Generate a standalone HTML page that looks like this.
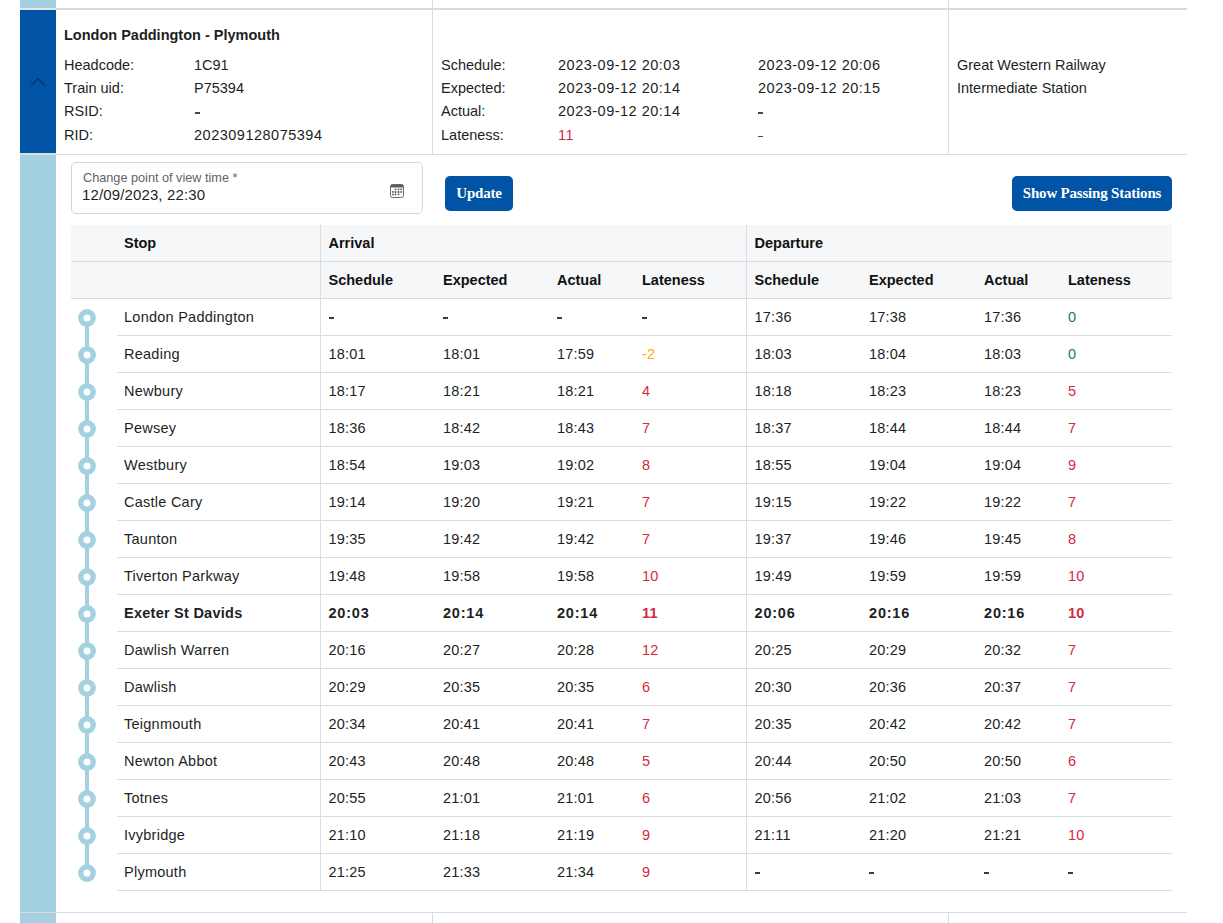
<!DOCTYPE html>
<html><head><meta charset="utf-8">
<style>
*{box-sizing:border-box;margin:0;padding:0}
html,body{width:1223px;height:923px;overflow:hidden;background:#fff}
body{font-family:"Liberation Sans",sans-serif;font-size:14px;color:#1d1f23;position:relative}
.abs{position:absolute}
.colL{position:absolute;left:20px;width:36px;background:#a4d1e1}
.vl{position:absolute;width:1px;background:#d6dbe0}
.hl{position:absolute;height:1px;background:#d6dbe0}
.info{position:absolute;line-height:23.2px;white-space:nowrap;font-size:14.5px}
.title{position:absolute;left:64px;top:25px;font-weight:bold;line-height:20px;font-size:14.5px}
.r{color:#d42a3c}.g{color:#1a7f4b}.o{color:#ffad00}
.dt{position:absolute;left:71px;top:162px;width:352px;height:52px;border:1px solid #d3d9df;border-radius:5px}
.dt .lab{position:absolute;left:11px;top:7px;font-size:12.7px;color:#5f6368;line-height:16px}
.dt .val{position:absolute;left:10px;top:23px;font-size:15px;letter-spacing:0.13px;color:#1d1f23;line-height:18px}
.btn{position:absolute;background:#0153a6;color:#fff;font-family:"Liberation Serif",serif;font-weight:bold;font-size:15px;letter-spacing:-0.2px;border-radius:5px;text-align:center;line-height:35px;height:35px;top:176px}
table{position:absolute;left:71px;top:225px;width:1101px;border-collapse:collapse;table-layout:fixed}
td,th{height:37px;padding:0 0 0 8px;text-align:left;white-space:nowrap;border-bottom:1px solid #dadee3;font-size:14.5px}
thead tr:first-child th{height:36px}
thead th{color:#111;background:#f6f7f9;font-weight:bold;border-bottom:1px solid #d9dcdf}
.bl{border-left:1px solid #dadee3}
td:nth-child(2),th:nth-child(2){padding-left:7px}
td:nth-child(2){letter-spacing:0.25px}
td.ic{border-bottom:none;position:relative;padding:0}
tr.cur td{font-weight:bold}
tr.cur td:nth-child(3),tr.cur td:nth-child(4),tr.cur td:nth-child(5),tr.cur td:nth-child(7),tr.cur td:nth-child(8),tr.cur td:nth-child(9){letter-spacing:0.8px}
td:nth-child(n+3){letter-spacing:0.2px}
.d{display:inline-block;width:5px;height:1.7px;background:#383b40;vertical-align:middle;position:relative;top:0.5px;margin-left:0}
.d2{display:inline-block;width:5px;height:1.5px;background:#45484d;vertical-align:middle;position:relative;top:0.5px}
.cr{color:#d42a3c}.cg{color:#1a7f4b}.co{color:#ffad00}
</style></head><body>
<!-- top row remnant -->
<div class="colL" style="top:0;height:8px"></div>
<div class="vl" style="left:432px;top:0;height:8px"></div>
<div class="vl" style="left:948px;top:0;height:8px"></div>
<div class="abs" style="left:56px;top:8px;width:1131px;height:2px;background:#d6dbe0"></div>
<div class="abs" style="left:20px;top:8px;width:36px;height:2px;background:#e6e6e6"></div>
<!-- info row -->
<div class="abs" style="left:20px;top:10px;width:36px;height:143px;background:#0153a6"></div>
<svg class="abs" style="left:20px;top:70px" width="36" height="24"><path d="M11.2 15.6 L18 8.7 L24.8 15.6" fill="none" stroke="#0c2c5c" stroke-width="1.2"/></svg>
<div class="vl" style="left:432px;top:10px;height:144px"></div>
<div class="vl" style="left:948px;top:10px;height:144px"></div>
<div class="hl" style="left:56px;top:154px;width:1131px"></div>
<div class="abs" style="left:20px;top:153px;width:36px;height:2px;background:#dcdcdc"></div>
<div class="title">London Paddington - Plymouth</div>
<div class="info" style="left:64px;top:54px">Headcode:<br>Train uid:<br>RSID:<br>RID:</div>
<div class="info" style="left:194px;top:54px">1C91<br>P75394<br><b class="d2" style="margin-left:1px"></b><br><span style="letter-spacing:0.5px">202309128075394</span></div>
<div class="info" style="left:441px;top:54px">Schedule:<br>Expected:<br>Actual:<br>Lateness:</div>
<div class="info" style="left:558px;top:54px;letter-spacing:0.5px">2023-09-12 20:03<br>2023-09-12 20:14<br>2023-09-12 20:14<br><span class="r">11</span></div>
<div class="info" style="left:758px;top:54px;letter-spacing:0.5px">2023-09-12 20:06<br>2023-09-12 20:15<br><b class="d2"></b><br><b class="d2"></b></div>
<div class="info" style="left:957px;top:54px">Great Western Railway<br>Intermediate Station</div>
<!-- expanded -->
<div class="colL" style="top:155px;height:768px"></div>
<div class="dt"><div class="lab">Change point of view time *</div><div class="val">12/09/2023, 22:30</div>
<svg class="abs" style="left:318px;top:21px" width="14" height="14" viewBox="0 0 14 14"><rect x="0.5" y="0.5" width="13" height="13" rx="2" fill="#fff" stroke="#6b6b6b"/><path d="M2.5 0.5h9a2 2 0 0 1 2 2v1h-13v-1a2 2 0 0 1 2-2z" fill="#5c5c5c"/><g fill="#5e5e5e"><rect x="4.7" y="4.5" width="1.7" height="1.7" rx="0.5"/><rect x="7.7" y="4.5" width="1.7" height="1.7" rx="0.5"/><rect x="10.2" y="4.6" width="1.9" height="1.4" rx="0.5"/><rect x="2" y="7" width="1.8" height="1.8" rx="0.4"/><rect x="4.7" y="6.9" width="1.7" height="2.1" rx="0.5"/><rect x="7.7" y="6.9" width="1.7" height="2.1" rx="0.5"/><rect x="10.2" y="7" width="1.8" height="1.8" rx="0.4"/><rect x="2" y="9.8" width="1.9" height="1.4" rx="0.5"/><rect x="4.7" y="9.6" width="1.7" height="1.7" rx="0.5"/><rect x="7.7" y="9.6" width="1.7" height="1.7" rx="0.5"/></g><g fill="#c8c8c8"><rect x="6.4" y="5" width="1.3" height="0.8"/><rect x="6.4" y="7.5" width="1.3" height="1"/><rect x="6.4" y="10.1" width="1.3" height="0.8"/></g></svg>
</div>
<div class="btn" style="left:445px;width:68px">Update</div>
<div class="btn" style="left:1012px;width:160px">Show Passing Stations</div>
<table>
<colgroup><col style="width:46px"><col style="width:203px"><col style="width:115px"><col style="width:114px"><col style="width:85px"><col style="width:112px"><col style="width:115px"><col style="width:115px"><col style="width:84px"><col style="width:112px"></colgroup>
<thead>
<tr><th></th><th>Stop</th><th colspan="4" class="bl">Arrival</th><th colspan="4" class="bl">Departure</th></tr>
<tr><th></th><th></th><th class="bl">Schedule</th><th>Expected</th><th>Actual</th><th>Lateness</th><th class="bl">Schedule</th><th>Expected</th><th>Actual</th><th>Lateness</th></tr>
</thead>
<tbody>
<tr><td class="ic"></td><td>London Paddington</td><td class="bl"><b class="d"></b></td><td><b class="d"></b></td><td><b class="d"></b></td><td><b class="d"></b></td><td class="bl">17:36</td><td>17:38</td><td>17:36</td><td class="cg">0</td></tr>
<tr><td class="ic"></td><td>Reading</td><td class="bl">18:01</td><td>18:01</td><td>17:59</td><td class="co">-2</td><td class="bl">18:03</td><td>18:04</td><td>18:03</td><td class="cg">0</td></tr>
<tr><td class="ic"></td><td>Newbury</td><td class="bl">18:17</td><td>18:21</td><td>18:21</td><td class="cr">4</td><td class="bl">18:18</td><td>18:23</td><td>18:23</td><td class="cr">5</td></tr>
<tr><td class="ic"></td><td>Pewsey</td><td class="bl">18:36</td><td>18:42</td><td>18:43</td><td class="cr">7</td><td class="bl">18:37</td><td>18:44</td><td>18:44</td><td class="cr">7</td></tr>
<tr><td class="ic"></td><td>Westbury</td><td class="bl">18:54</td><td>19:03</td><td>19:02</td><td class="cr">8</td><td class="bl">18:55</td><td>19:04</td><td>19:04</td><td class="cr">9</td></tr>
<tr><td class="ic"></td><td>Castle Cary</td><td class="bl">19:14</td><td>19:20</td><td>19:21</td><td class="cr">7</td><td class="bl">19:15</td><td>19:22</td><td>19:22</td><td class="cr">7</td></tr>
<tr><td class="ic"></td><td>Taunton</td><td class="bl">19:35</td><td>19:42</td><td>19:42</td><td class="cr">7</td><td class="bl">19:37</td><td>19:46</td><td>19:45</td><td class="cr">8</td></tr>
<tr><td class="ic"></td><td>Tiverton Parkway</td><td class="bl">19:48</td><td>19:58</td><td>19:58</td><td class="cr">10</td><td class="bl">19:49</td><td>19:59</td><td>19:59</td><td class="cr">10</td></tr>
<tr class="cur"><td class="ic"></td><td>Exeter St Davids</td><td class="bl">20:03</td><td>20:14</td><td>20:14</td><td class="cr">11</td><td class="bl">20:06</td><td>20:16</td><td>20:16</td><td class="cr">10</td></tr>
<tr><td class="ic"></td><td>Dawlish Warren</td><td class="bl">20:16</td><td>20:27</td><td>20:28</td><td class="cr">12</td><td class="bl">20:25</td><td>20:29</td><td>20:32</td><td class="cr">7</td></tr>
<tr><td class="ic"></td><td>Dawlish</td><td class="bl">20:29</td><td>20:35</td><td>20:35</td><td class="cr">6</td><td class="bl">20:30</td><td>20:36</td><td>20:37</td><td class="cr">7</td></tr>
<tr><td class="ic"></td><td>Teignmouth</td><td class="bl">20:34</td><td>20:41</td><td>20:41</td><td class="cr">7</td><td class="bl">20:35</td><td>20:42</td><td>20:42</td><td class="cr">7</td></tr>
<tr><td class="ic"></td><td>Newton Abbot</td><td class="bl">20:43</td><td>20:48</td><td>20:48</td><td class="cr">5</td><td class="bl">20:44</td><td>20:50</td><td>20:50</td><td class="cr">6</td></tr>
<tr><td class="ic"></td><td>Totnes</td><td class="bl">20:55</td><td>21:01</td><td>21:01</td><td class="cr">6</td><td class="bl">20:56</td><td>21:02</td><td>21:03</td><td class="cr">7</td></tr>
<tr><td class="ic"></td><td>Ivybridge</td><td class="bl">21:10</td><td>21:18</td><td>21:19</td><td class="cr">9</td><td class="bl">21:11</td><td>21:20</td><td>21:21</td><td class="cr">10</td></tr>
<tr><td class="ic"></td><td>Plymouth</td><td class="bl">21:25</td><td>21:33</td><td>21:34</td><td class="cr">9</td><td class="bl"><b class="d"></b></td><td><b class="d"></b></td><td><b class="d"></b></td><td><b class="d"></b></td></tr>
</tbody>
</table>
<svg class="abs" style="left:71px;top:300px" width="32" height="600"><g fill="#a4d1e1"><rect x="14" y="18" width="4" height="555"/><circle cx="16" cy="18" r="8.9"/><circle cx="16" cy="55" r="8.9"/><circle cx="16" cy="92" r="8.9"/><circle cx="16" cy="129" r="8.9"/><circle cx="16" cy="166" r="8.9"/><circle cx="16" cy="203" r="8.9"/><circle cx="16" cy="240" r="8.9"/><circle cx="16" cy="277" r="8.9"/><circle cx="16" cy="314" r="8.9"/><circle cx="16" cy="351" r="8.9"/><circle cx="16" cy="388" r="8.9"/><circle cx="16" cy="425" r="8.9"/><circle cx="16" cy="462" r="8.9"/><circle cx="16" cy="499" r="8.9"/><circle cx="16" cy="536" r="8.9"/><circle cx="16" cy="573" r="8.9"/></g><circle cx="16" cy="18" r="3.5" fill="#fff"/><circle cx="16" cy="55" r="3.5" fill="#fff"/><circle cx="16" cy="92" r="3.5" fill="#fff"/><circle cx="16" cy="129" r="3.5" fill="#fff"/><circle cx="16" cy="166" r="3.5" fill="#fff"/><circle cx="16" cy="203" r="3.5" fill="#fff"/><circle cx="16" cy="240" r="3.5" fill="#fff"/><circle cx="16" cy="277" r="3.5" fill="#fff"/><circle cx="16" cy="314" r="3.5" fill="#fff"/><circle cx="16" cy="351" r="3.5" fill="#fff"/><circle cx="16" cy="388" r="3.5" fill="#fff"/><circle cx="16" cy="425" r="3.5" fill="#fff"/><circle cx="16" cy="462" r="3.5" fill="#fff"/><circle cx="16" cy="499" r="3.5" fill="#fff"/><circle cx="16" cy="536" r="3.5" fill="#fff"/><circle cx="16" cy="573" r="3.5" fill="#fff"/></svg>
<div class="hl" style="left:56px;top:912px;width:1131px"></div>
<div class="abs" style="left:20px;top:912px;width:36px;height:1px;background:#dcdcdc"></div>
<div class="vl" style="left:432px;top:913px;height:10px"></div>
<div class="vl" style="left:948px;top:913px;height:10px"></div>
</body></html>
